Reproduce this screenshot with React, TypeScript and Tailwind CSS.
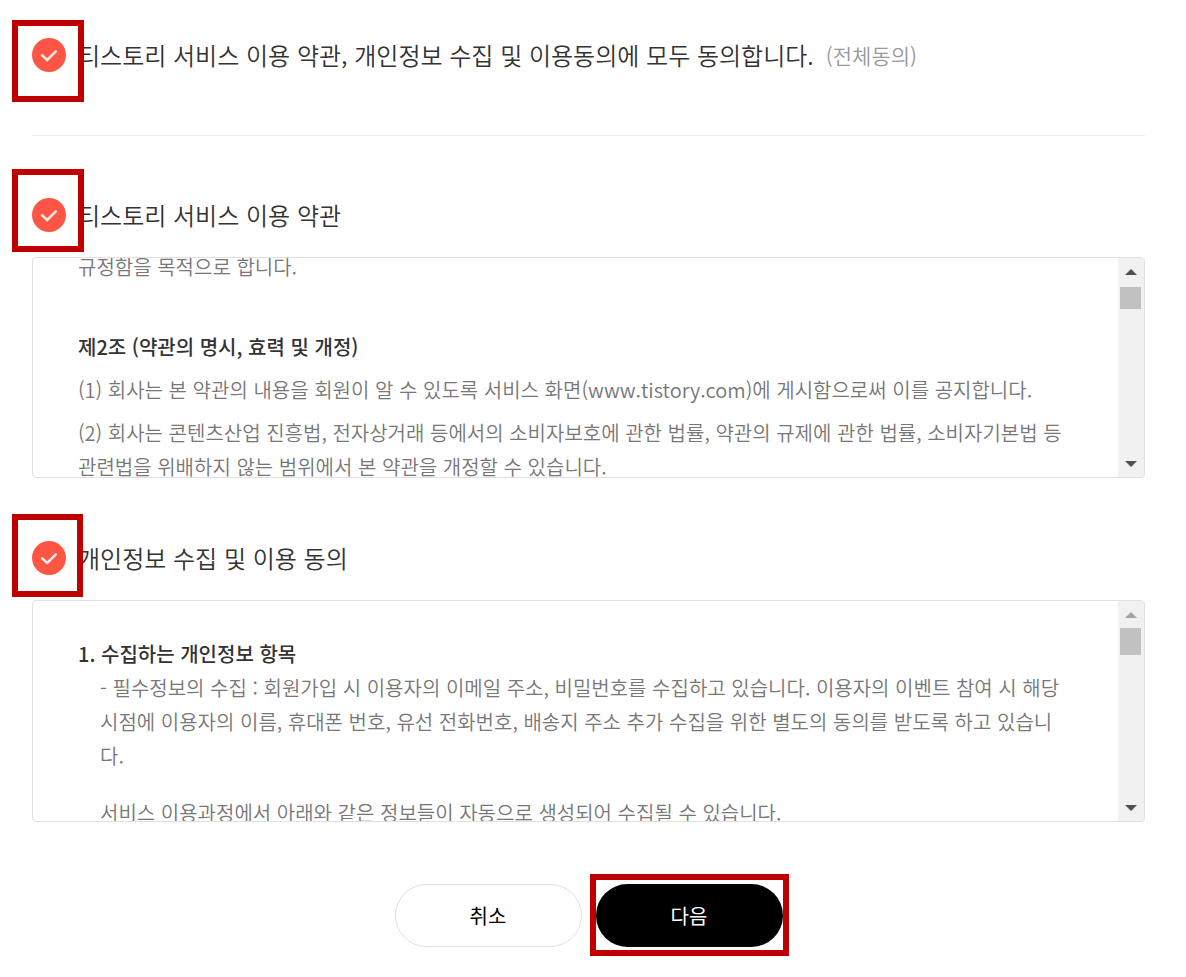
import { useState } from "react";
import type { ReactNode } from "react";
import clsx from "clsx";

type AgreeRowProps = {
    id: string;
    checked: boolean;
    onChange: (checked: boolean) => void;
    markClass: string;
    children: ReactNode;
};

function AgreeRow({ id, checked, onChange, markClass, children }: AgreeRowProps) {
    return (
        <div className="relative flex h-20 items-center">
            <span className="relative size-[34px] shrink-0">
                <input
                    id={id}
                    type="checkbox"
                    checked={checked}
                    onChange={(e) => onChange(e.target.checked)}
                    className="block size-full appearance-none rounded-full bg-gray-300 checked:bg-[#ff5544]"
                />
                <svg viewBox="0 0 34 34" className="pointer-events-none absolute inset-0 size-full" fill="none" stroke="#ffe9e6" strokeWidth="2.6" strokeLinecap="round">
                    <path d="M10.2 17.4 L15.2 22 L23.8 13.4" />
                </svg>
            </span>
            <label htmlFor={id} className="flex items-center gap-3 pl-3 text-2xl font-[350] text-[#333]">
                {children}
            </label>
            <span className={clsx("pointer-events-none absolute -left-5 border-6 border-[#c00000]", markClass)} />
        </div>
    );
}

type ScrollBoxProps = {
    boxClass: string;
    thumbClass: string;
    atTop?: boolean;
    children: ReactNode;
};

function ScrollBox({ boxClass, thumbClass, atTop, children }: ScrollBoxProps) {
    return (
        <div className={clsx("mt-0.5 flex overflow-hidden rounded border border-[#e0e0e0]", boxClass)}>
            <div className="min-w-0 flex-1 overflow-hidden pr-12 pl-[45px] text-xl leading-[34px] font-[350] text-[#777]">
                {children}
            </div>
            <div className="flex w-[26px] shrink-0 flex-col items-center bg-[#f1f1f1]">
                <button type="button" aria-label="위로" className="flex h-[27px] w-full shrink-0 items-center justify-center">
                    <svg width="12" height="6" viewBox="0 0 12 6" fill={atTop ? "#a3a3a3" : "#505050"}>
                        <path d="M0 6 L6 0 L12 6 Z" />
                    </svg>
                </button>
                <div className="w-full flex-1 px-0.5">
                    <div className={clsx("w-[21px] bg-[#c1c1c1]", thumbClass)} />
                </div>
                <button type="button" aria-label="아래로" className="flex h-[27px] w-full shrink-0 items-center justify-center">
                    <svg width="12" height="6" viewBox="0 0 12 6" fill="#505050">
                        <path d="M0 0 L12 0 L6 6 Z" />
                    </svg>
                </button>
            </div>
        </div>
    );
}

export default function App() {
    const [terms, setTerms] = useState(true);
    const [privacy, setPrivacy] = useState(true);

    const handleAll = (checked: boolean) => {
        setTerms(checked);
        setPrivacy(checked);
    };

    return (
        <main lang="ko" className="min-h-screen bg-white pt-[15px] pr-[41px] pb-5 pl-8 font-['Noto_Sans_CJK_KR',sans-serif]">
            <form onSubmit={(e) => e.preventDefault()}>
                <AgreeRow id="all" checked={terms && privacy} onChange={handleAll} markClass="top-[5px] h-[82px] w-[72px]">
                    티스토리 서비스 이용 약관, 개인정보 수집 및 이용동의에 모두 동의합니다.
                    <span className="text-[21px] text-[#999]">(전체동의)</span>
                </AgreeRow>

                <hr className="mt-10 border-[#eee]" />

                <section className="mt-[39px]">
                    <AgreeRow id="terms" checked={terms} onChange={setTerms} markClass="-top-1.5 h-[83px] w-[72px]">
                        티스토리 서비스 이용 약관
                    </AgreeRow>
                    <ScrollBox boxClass="h-[221px]" thumbClass="mt-0.5 h-[22px]">
                        <p className="-mt-2">규정함을 목적으로 합니다.</p>
                        <h3 className="mt-[46px] font-medium text-[#333]">제2조 (약관의 명시, 효력 및 개정)</h3>
                        <p className="mt-[9px]">
                            (1) 회사는 본 약관의 내용을 회원이 알 수 있도록 서비스 화면(www.tistory.com)에 게시함으로써 이를 공지합니다.
                        </p>
                        <p className="mt-[9px]">
                            (2) 회사는 콘텐츠산업 진흥법, 전자상거래 등에서의 소비자보호에 관한 법률, 약관의 규제에 관한 법률, 소비자기본법 등 관련법을 위배하지 않는 범위에서 본 약관을 개정할 수 있습니다.
                        </p>
                    </ScrollBox>
                </section>

                <section className="mt-10">
                    <AgreeRow id="privacy" checked={privacy} onChange={setPrivacy} markClass="-top-1 h-[83px] w-[71px]">
                        개인정보 수집 및 이용 동의
                    </AgreeRow>
                    <ScrollBox boxClass="h-[222px]" thumbClass="h-[27px]" atTop>
                        <h3 className="mt-9 font-medium text-[#333]">1. 수집하는 개인정보 항목</h3>
                        <div className="pl-[22px]">
                            <p>
                                - 필수정보의 수집 : 회원가입 시 이용자의 이메일 주소, 비밀번호를 수집하고 있습니다. 이용자의 이벤트 참여 시 해당 시점에 이용자의 이름, 휴대폰 번호, 유선 전화번호, 배송지 주소 추가 수집을 위한 별도의 동의를 받도록 하고 있습니다.
                            </p>
                            <p className="mt-[23px]">서비스 이용과정에서 아래와 같은 정보들이 자동으로 생성되어 수집될 수 있습니다.</p>
                        </div>
                    </ScrollBox>
                </section>

                <div className="mt-[62px] flex justify-center gap-3.5">
                    <button type="button" className="h-[63px] w-[187px] rounded-full border border-[#e0e0e0] text-xl text-black">
                        취소
                    </button>
                    <div className="relative">
                        <button type="submit" className="h-[63px] w-[187px] rounded-full bg-black text-xl text-white">
                            다음
                        </button>
                        <span className="pointer-events-none absolute -top-2.5 -left-1.5 h-[82px] w-[199px] border-6 border-[#c00000]" />
                    </div>
                </div>
            </form>
        </main>
    );
}
